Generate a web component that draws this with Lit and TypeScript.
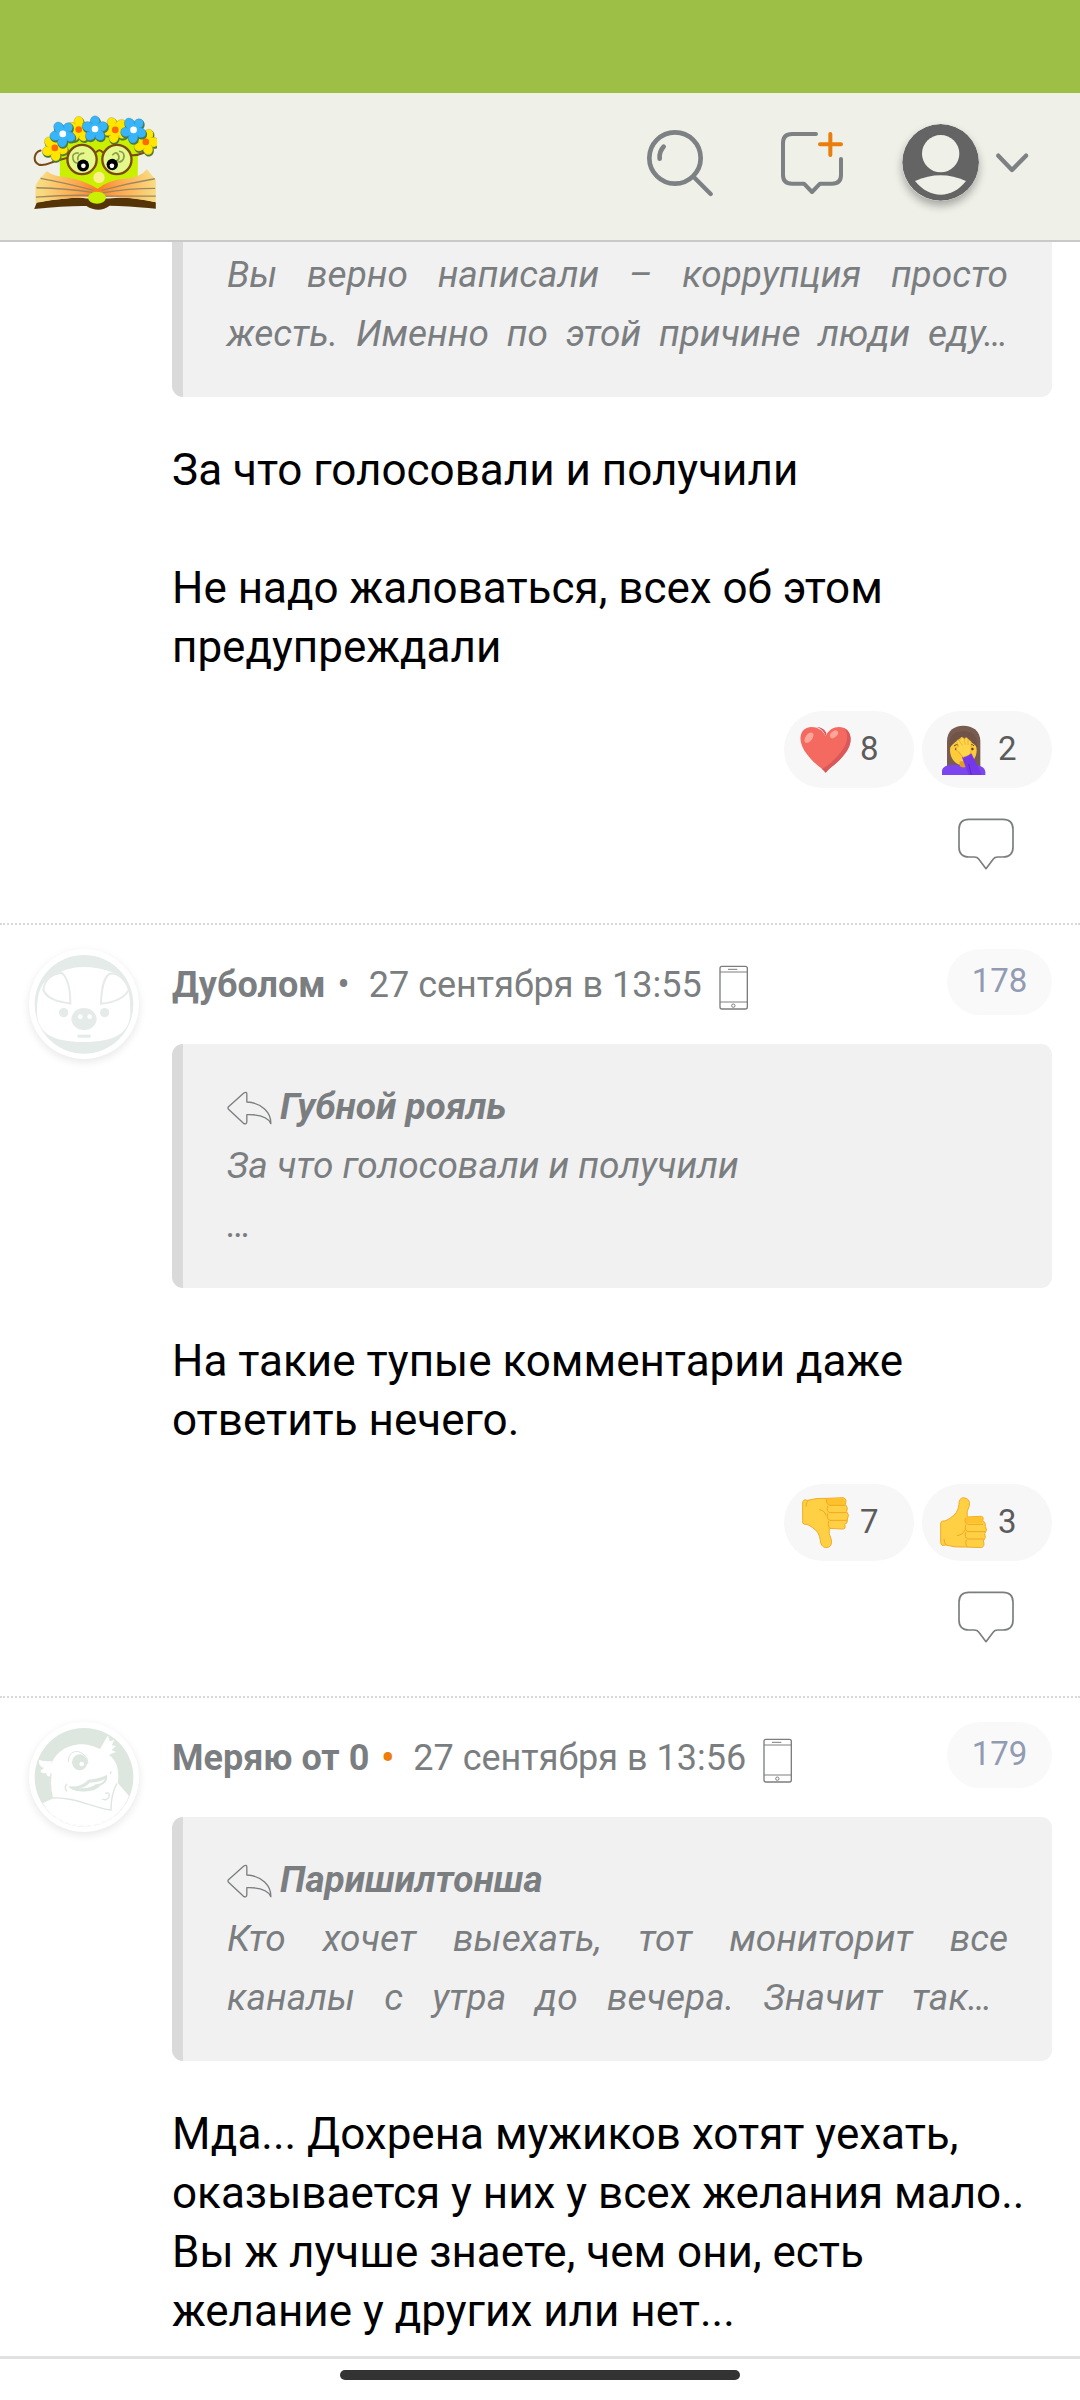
import { LitElement, html, css, svg, nothing } from "lit";
import { customElement, property } from "lit/decorators.js";

type ReactionKind = "heart" | "facepalm" | "down" | "up";
type QuoteLine = { text: string; mode?: "fill" | "clipped" };
type Post = {
  author?: string;
  online?: boolean;
  date?: string;
  number?: string;
  avatar?: "pig" | "dragon";
  quoteAuthor?: string;
  quote: QuoteLine[];
  body: string[];
  reactions: { kind: ReactionKind; label: string; count: number }[];
};

const posts: Post[] = [
  {
    quote: [
      { text: "Вы верно написали – коррупция просто", mode: "fill" },
      { text: "жесть. Именно по этой причине люди еду…", mode: "fill" },
    ],
    body: ["За что голосовали и получили", "", "Не надо жаловаться, всех об этом предупреждали"],
    reactions: [
      { kind: "heart", label: "Сердце", count: 8 },
      { kind: "facepalm", label: "Рукалицо", count: 2 },
    ],
  },
  {
    author: "Дуболом",
    date: "27 сентября в 13:55",
    number: "178",
    avatar: "pig",
    quoteAuthor: "Губной рояль",
    quote: [{ text: "За что голосовали и получили" }, { text: "…" }],
    body: ["На такие тупые комментарии даже ответить нечего."],
    reactions: [
      { kind: "down", label: "Не нравится", count: 7 },
      { kind: "up", label: "Нравится", count: 3 },
    ],
  },
  {
    author: "Меряю от 0",
    online: true,
    date: "27 сентября в 13:56",
    number: "179",
    avatar: "dragon",
    quoteAuthor: "Паришилтонша",
    quote: [
      { text: "Кто хочет выехать, тот мониторит все", mode: "fill" },
      { text: "каналы с утра до вечера. Значит так…", mode: "clipped" },
    ],
    body: [
      "Мда... Дохрена мужиков хотят уехать, оказывается у них у всех желания мало.. Вы ж лучше знаете, чем они, есть желание у других или нет...",
    ],
    reactions: [],
  },
];

const petals = [0, 72, 144, 216, 288];
const flower = (x: number, y: number, turn: number, petal: string, core: string) => svg`
  <g transform="translate(${x} ${y})">
    <g fill="#4f7d3f" transform="translate(2 4) rotate(${turn})">
      ${petals.map((a) => svg`<ellipse cx="0" cy="-23" rx="16" ry="18" transform="rotate(${a})" />`)}
    </g>
    <g fill=${petal} stroke="#00000030" stroke-width="2" transform="rotate(${turn})">
      ${petals.map((a) => svg`<ellipse cx="0" cy="-22" rx="15" ry="18" transform="rotate(${a})" />`)}
    </g>
    <circle r="19" fill=${petal} />
    <circle r="10" fill=${core} />
  </g>`;

const logo = html`<svg class="logo" viewBox="102 98 372 292" aria-hidden="true">
  <defs>
    <radialGradient id="pages" gradientUnits="userSpaceOnUse" cx="296" cy="325" r="170">
      <stop offset="0" stop-color="#ff7a1c" />
      <stop offset="0.35" stop-color="#ffa44a" />
      <stop offset="1" stop-color="#f9da80" />
    </radialGradient>
  </defs>
  <path d="M182 180Q300 150 418 180L416 330H182Z" fill="#c8f000" />
  <path d="M124 208C104 214 100 240 118 250C134 256 150 246 166 241L204 230" fill="none" stroke="#7a4a12" stroke-width="6" stroke-linecap="round" />
  <path d="M398 222C415 224 424 218 436 214" fill="none" stroke="#7a4a12" stroke-width="6" />
  <path d="M105 384L113 364Q230 345 262 352H330Q400 345 471 364V383Q380 374 332 374Q300 398 262 375Q200 374 105 384Z" fill="#553507" />
  <path d="M143 270Q165 286 205 289Q250 295 296 323Q330 297 370 294Q425 290 444 264L471 296V364Q390 346 296 348Q200 348 109 366V315Q112 300 143 270Z" fill="url(#pages)" />
  <path d="M124 292Q200 306 284 328M112 320Q200 322 280 334M110 348Q200 341 280 343M468 293Q390 306 308 328M469 322Q390 322 312 335M471 345H312" fill="none" stroke="#9a8960" stroke-width="4" />
  <ellipse cx="294" cy="350" rx="27" ry="18" fill="#c8f000" />
  <circle cx="300" cy="289" r="17" fill="#fff08c" />
  ${flower(167, 200, 30, "#ffe600", "#ff6a00")}
  ${flower(239, 145, 0, "#ffe600", "#ff6a00")}
  ${flower(191, 158, 40, "#38b4f8", "#ffffff")}
  ${flower(441, 182, 20, "#ffe600", "#ff6a00")}
  ${flower(349, 146, -25, "#ffe600", "#ff6a00")}
  ${flower(404, 146, 40, "#38b4f8", "#ffffff")}
  ${flower(288, 143, 0, "#38b4f8", "#ffffff")}
  <g fill="#e4f88c" stroke="#7a4a12" stroke-width="7">
    <circle cx="249" cy="235" r="44" /><circle cx="354" cy="235" r="44" />
  </g>
  <path d="M291 214Q301 200 312 214" fill="none" stroke="#7a4a12" stroke-width="6" />
  <path d="M239 215Q216 215 222 234Q226 248 242 245M256 216Q234 216 236 238M340 222Q354 206 360 226Q361 238 350 240M360 210Q380 212 374 232Q368 244 358 242" fill="none" stroke="#8c9c48" stroke-width="5" />
  <circle cx="252" cy="253" r="18" /><circle cx="340" cy="250" r="17" />
  <circle cx="253" cy="254" r="7" fill="#fff" /><circle cx="339" cy="254" r="7" fill="#fff" />
</svg>`;

const emojis: Record<ReactionKind, unknown> = {
  heart: html`<svg class="emoji" viewBox="300 100 153 153" aria-hidden="true">
    <path d="M377 246C366 232 344 221 322 192C300 166 296 138 308 121C324 103 360 104 377 136C388 108 424 100 442 119C460 137 452 170 434 190C412 219 390 230 377 246Z" fill="#f46a60" />
    <path d="M430 111C458 122 458 160 434 190C412 219 390 230 377 246C374 242 370 238 366 235C392 221 424 188 436 163C446 138 441 120 430 111Z" fill="#d8585c" />
    <path d="M377 136C372 122 362 113 350 110C362 108 375 117 379 127Z" fill="#d8585c" />
    <ellipse cx="327" cy="141" rx="10" ry="18" transform="rotate(38 327 141)" fill="#ffa59a" />
    <ellipse cx="402" cy="131" rx="9" ry="14" transform="rotate(48 402 131)" fill="#ffa59a" />
  </svg>`,
  facepalm: html`<svg class="emoji" viewBox="714 100 153 153" aria-hidden="true">
    <path d="M741 228V152C741 120 762 105 790 105S841 120 841 152V228Z" fill="#795c50" />
    <ellipse cx="790" cy="179" rx="40" ry="45" fill="#fccb3a" />
    <path d="M748 172C760 158 772 150 784 140C796 150 820 152 832 172C834 132 816 122 790 122S746 132 748 172Z" fill="#70544a" />
    <path d="M779 212H802V232Q790 240 779 232Z" fill="#e59b28" />
    <path d="M726 253V241C728 224 750 221 776 223Q790 238 806 223C840 221 854 228 856 243V253Z" fill="#7c45f0" />
    <path d="M786 200L814 188L842 245L844 253H806Z" fill="#7438e8" />
    <path d="M806 220L814 253" stroke="#5e25cb" stroke-width="3" />
    <path d="M762 166Q770 158 777 164M812 162Q818 160 822 166" fill="none" stroke="#624337" stroke-width="3" />
    <circle cx="769" cy="175" r="4" fill="#513b32" /><circle cx="817" cy="175" r="4" fill="#513b32" />
    <path d="M789 200L769 177Q766 168 776 168L770 152Q772 144 779 150L782 142Q788 137 793 145Q798 136 804 145L810 150Q816 151 813 162V180Q812 190 805 194Z" fill="#ffd54a" stroke="#e9a42c" stroke-width="2" />
    <path d="M778 151L788 165M792 145L796 162M804 147L804 163M789 200L775 181" stroke="#e9a42c" stroke-width="2" fill="none" />
  </svg>`,
  down: html`<svg class="emoji" viewBox="300 110 153 153" aria-hidden="true">
    <path d="M308 128Q309 115 322 120Q350 112 382 114L430 112Q442 116 436 132Q446 142 440 154Q450 164 442 176Q444 190 434 192Q440 208 424 206L388 204Q384 218 394 238Q398 262 376 262Q362 258 361 240Q358 214 338 202Q322 190 314 192Q306 192 308 180Z" fill="#ffd044" stroke="#f0ac28" stroke-width="3" />
    <path d="M382 116L430 114Q438 120 434 134H385Q376 125 382 116Z" fill="#ffc12c" />
    <g fill="none" stroke="#f0a823" stroke-width="3" stroke-linecap="round">
      <path d="M380 117Q377 132 390 135H434M383 138Q378 154 390 157H438M383 160Q378 176 390 180H440M386 183Q382 200 390 204M358 148Q374 150 378 164M324 121Q318 124 318 138" />
    </g>
  </svg>`,
  up: html`<svg class="emoji" viewBox="714 110 153 153" aria-hidden="true">
    <path d="M722 246Q723 259 736 254Q764 262 796 260L844 262Q856 258 850 242Q860 232 854 220Q864 210 856 198Q858 184 848 182Q854 166 838 168L802 170Q798 156 808 136Q812 114 790 112Q776 114 777 132Q774 160 752 172Q736 184 728 182Q720 184 722 194Z" fill="#ffd044" stroke="#f0ac28" stroke-width="3" />
    <path d="M798 170L838 169Q850 170 846 188H798Z" fill="#ffc12c" />
    <g fill="none" stroke="#f0a823" stroke-width="3" stroke-linecap="round">
      <path d="M796 174Q792 188 804 192H848M797 194Q792 210 804 214H854M797 217Q792 232 804 236H850M799 239Q794 254 802 260M772 226Q788 224 796 208M738 253Q732 250 732 236" />
    </g>
  </svg>`,
};

const avatars = {
  pig: html`<svg class="avatar-art" viewBox="86 87 330 330" aria-hidden="true">
    <circle cx="251" cy="253" r="148" fill="#e5ebe9" />
    <path d="M250 141C305 141 340 160 352 162C385 180 390 230 390 275C390 335 350 366 250 366S110 335 110 275C110 230 118 180 165 161C185 156 205 141 250 141Z" fill="#fff" />
    <path d="M185 159C204 176 210 210 210 251C180 246 142 240 129 210C132 180 155 160 185 159Z" fill="#fff" stroke="#e5ebe9" stroke-width="6" />
    <path d="M326 162C306 180 303 215 302 251C335 248 370 240 386 208C376 178 350 154 326 162Z" fill="#fff" stroke="#e5ebe9" stroke-width="6" />
    <g fill="#e5ebe9"><circle cx="190" cy="278" r="14" /><circle cx="313" cy="278" r="14" /><ellipse cx="251" cy="297" rx="38" ry="33" /><rect x="232" y="344" width="39" height="9" /></g>
    <g fill="#fff"><circle cx="240" cy="290" r="7" /><circle cx="268" cy="290" r="7" /></g>
  </svg>`,
  dragon: html`<svg class="avatar-art" viewBox="86 96 330 330" aria-hidden="true">
    <circle cx="251" cy="262" r="148" fill="#dde6df" />
    <path d="M127 340L156 326C146 290 147 262 152 250Q146 242 150 232C160 190 200 163 243 163Q270 163 299 177L323 136L328 154L342 150L334 166L347 168L334 180L347 186L326 194C352 215 356 240 353 280L386 318C364 375 312 410 251 410C198 410 150 382 127 340Z" fill="#fff" />
    <path d="M116 209Q134 216 154 213L152 256Q142 266 137 249Q124 252 120 242L131 234Q114 230 116 209Z" fill="#fff" />
    <path d="M204 216C204 192 218 182 234 185C252 190 264 205 262 222" fill="none" stroke="#dde6df" stroke-width="3" />
    <ellipse cx="238" cy="217" rx="23" ry="24" fill="#dde6df" /><circle cx="244" cy="222" r="7" fill="#fff" />
    <path d="M204 289Q240 294 264 269Q300 266 320 254Q324 278 302 286Q282 308 240 304Q212 302 204 289Z" fill="#dde6df" />
    <path d="M232 294Q252 296 268 278Q298 276 314 266Q310 280 286 283Q268 298 232 294Z" fill="#fff" />
    <path d="M200 281Q190 290 199 304M304 327Q320 334 326 320Q330 304 314 310M330 252L332 244M156 324C220 320 270 350 332 360Q332 310 350 280M152 250Q147 290 156 324" fill="none" stroke="#dde6df" stroke-width="4" />
    <path d="M130 342C160 400 240 420 300 400C350 384 372 350 385 320" fill="none" stroke="#dde6df" stroke-width="1" stroke-dasharray="12 10" />
  </svg>`,
};

@customElement("forum-header")
class ForumHeader extends LitElement {
  static styles = css`
    :host { display: block; }
    .bar {
      display: flex; align-items: center; box-sizing: border-box;
      padding: 21px 51px 29px 33px;
      background: #eff0e8; border-bottom: 2px solid #c9cac7;
    }
    .home { display: block; margin-right: auto; }
    .logo { display: block; width: 124px; height: 97px; }
    .actions { display: flex; align-items: center; }
    button { display: flex; align-items: center; margin: 0; padding: 0; border: 0; background: none; cursor: pointer; }
    .search svg { width: 68px; height: 68px; }
    .compose { margin: 0 58px 0 66px; }
    .compose svg { width: 64px; height: 64px; }
    .account { gap: 16px; }
    .user { width: 77px; height: 77px; border-radius: 50%; box-shadow: 0 5px 9px #0000004d; }
    .chevron { width: 34px; height: 22px; }
  `;
  render() {
    return html`<header class="bar">
      <a class="home" href="#" aria-label="Главная">${logo}</a>
      <nav class="actions">
        <button class="search" aria-label="Поиск">
          <svg viewBox="78 90 204 204" fill="none" stroke="#7d8184" stroke-linecap="round" aria-hidden="true">
            <circle cx="165" cy="177" r="77" stroke-width="14" />
            <path d="M222 235L272 285" stroke-width="13" />
            <path d="M131 143Q117 158 119 179" stroke-width="14" />
          </svg>
        </button>
        <button class="compose" aria-label="Новая запись">
          <svg viewBox="480 96 192 192" fill="none" stroke-linecap="round" stroke-linejoin="round" aria-hidden="true">
            <path d="M588 105H516Q489 105 489 132V228Q489 254 516 254H552L576 279L600 254H636Q663 254 663 228V180" stroke="#7d8184" stroke-width="12" />
            <path d="M631 105V168M600 136H663" stroke="#ea7d0c" stroke-width="12" />
          </svg>
        </button>
        <button class="account" aria-label="Профиль">
          <svg class="user" viewBox="846 72 231 231" aria-hidden="true">
            <circle cx="962" cy="187" r="115" fill="#646464" />
            <circle cx="962" cy="161" r="56" fill="#eff0e8" />
            <path d="M885 243Q962 208 1038 243C1016 271 990 284 962 284S908 271 885 243Z" fill="#eff0e8" />
          </svg>
          <svg class="chevron" viewBox="1126 154 102 66" fill="none" stroke="#7d8184" stroke-width="13" stroke-linecap="round" stroke-linejoin="round" aria-hidden="true">
            <path d="M1136 165L1177 208L1219 165" />
          </svg>
        </button>
      </nav>
    </header>`;
  }
}

@customElement("forum-post")
class ForumPost extends LitElement {
  @property({ attribute: false }) post!: Post;

  static styles = css`
    :host { display: block; }
    a { color: inherit; text-decoration: none; }
    button { margin: 0; border: 0; font: inherit; cursor: pointer; }
    .post { display: flex; gap: 33px; padding: 24px 28px 0 29px; border-top: 2px dotted #d9d9d9; }
    .partial { padding-top: 0; border-top: 0; }
    .aside { flex: none; width: 110px; }
    .avatar { display: block; height: 110px; border-radius: 50%; background: #fff; box-shadow: 0 3px 9px #00000018; }
    .avatar-art { display: block; width: 110px; height: 110px; }
    .main { flex: 1; min-width: 0; }
    .head { display: flex; align-items: center; justify-content: space-between; height: 66px; margin-bottom: 29px; }
    .meta { display: flex; align-items: center; padding-top: 5px; color: #7b7e80; font-size: 36px; line-height: 42px; white-space: nowrap; }
    .author { font-weight: 700; }
    .dot { margin: 0 19px 0 12px; }
    .dot.online { color: #ee7d0b; font-weight: 700; }
    .phone { width: 30px; height: 46px; margin: 6px 0 0 17px; }
    .number {
      display: flex; align-items: center; justify-content: center; box-sizing: border-box;
      width: 105px; height: 66px; padding-bottom: 3px; border-radius: 33px;
      background: #f9f9f9; color: #929bb2; font-size: 33px; line-height: 39px;
    }
    .quote {
      margin: 0; padding: 33px 44px 34px; border-left: 11px solid #dadada; border-radius: 11px;
      background: #f1f1f1; color: #7b7e80; font-size: 37px; font-style: italic; line-height: 59px;
    }
    .partial .quote { padding-top: 3px; border-top-left-radius: 0; border-top-right-radius: 0; }
    .quote-author { display: flex; align-items: center; gap: 8px; font-weight: 700; }
    .arrow { width: 45px; height: 34px; margin-top: 3px; }
    .fill, .clipped { text-align: justify; text-align-last: justify; }
    .clipped { padding-right: 16px; }
    .text { margin: 44px 0 0; color: #000; font-size: 44px; line-height: 59px; }
    .text p { margin: 0; min-height: 59px; }
    .reactions { display: flex; justify-content: flex-end; gap: 8px; margin-top: 34px; }
    .reaction {
      display: flex; align-items: center; gap: 9px; box-sizing: border-box; width: 130px; height: 77px;
      padding: 0 0 0 16px; border-radius: 39px; background: #f7f7f7; color: #5c5c5c; font-size: 33px; line-height: 39px;
    }
    .emoji { width: 51px; height: 51px; }
    .count { padding-bottom: 3px; }
    .reply { display: block; margin: 30px 37px 53px auto; padding: 0; background: none; }
    .reply svg { display: block; width: 58px; height: 52px; }
  `;

  render() {
    const p = this.post;
    return html`<article class="post ${p.author ? "" : "partial"}">
      <div class="aside">
        ${p.avatar ? html`<a class="avatar" href="#" aria-label=${p.author}>${avatars[p.avatar]}</a>` : nothing}
      </div>
      <div class="main">
        ${p.author
          ? html`<header class="head">
              <div class="meta">
                <a class="author" href="#">${p.author}</a>
                <span class="dot ${p.online ? "online" : ""}">•</span>
                <time>${p.date}</time>
                <svg class="phone" viewBox="233 136 90 138" fill="none" stroke="#7b7e80" stroke-width="3" aria-hidden="true">
                  <rect x="236" y="140" width="82" height="128" rx="6" stroke-width="4" />
                  <path d="M236 157H318M236 247H318M260 149H288" />
                  <circle cx="276" cy="258" r="5" />
                </svg>
              </div>
              <a class="number" href="#">${p.number}</a>
            </header>`
          : nothing}
        <blockquote class="quote">
          ${p.quoteAuthor
            ? html`<a class="quote-author" href="#">
                <svg class="arrow" viewBox="680 512 134 102" fill="none" stroke="#7b7e80" stroke-width="4" stroke-linejoin="round" aria-hidden="true">
                  <path d="M684 559L730 518Q739 513 739 521V545C784 547 812 578 811 610C802 588 774 582 739 583V604Q738 614 729 609L684 567Q681 563 684 559Z" />
                </svg>
                <span>${p.quoteAuthor}</span>
              </a>`
            : nothing}
          ${p.quote.map((l) => html`<div class=${l.mode ?? "plain"}>${l.text}</div>`)}
        </blockquote>
        <div class="text">${p.body.map((t) => html`<p>${t}</p>`)}</div>
        ${p.reactions.length
          ? html`<div class="reactions">
                ${p.reactions.map(
                  (r) => html`<button class="reaction" aria-label="${r.label}: ${r.count}">
                    ${emojis[r.kind]}<span class="count">${r.count}</span>
                  </button>`
                )}
              </div>
              <button class="reply" aria-label="Ответить">
                <svg viewBox="771 380 174 156" fill="none" stroke="#7b7e80" stroke-width="5" stroke-linejoin="round" aria-hidden="true">
                  <path d="M807 384H909Q939 384 939 414V467Q939 497 909 497H893Q884 497 880 503L858 532L836 503Q832 497 823 497H807Q777 497 777 467V414Q777 384 807 384Z" />
                </svg>
              </button>`
          : nothing}
      </div>
    </article>`;
  }
}

@customElement("app-root")
class AppRoot extends LitElement {
  static styles = css`
    :host {
      display: flex; flex-direction: column; min-height: 100vh; background: #fff;
      font-family: Roboto, "Noto Sans", sans-serif;
    }
    .status { height: 93px; background: #9ebf45; }
    .system { display: flex; justify-content: center; margin-top: auto; padding: 11px 0 20px; border-top: 3px solid #e0e1e0; }
    .handle { width: 37%; height: 10px; border-radius: 5px; background: #333; }
    .feed { padding-bottom: 15px; }
  `;
  render() {
    return html`
      <div class="status"></div>
      <forum-header></forum-header>
      <main class="feed">${posts.map((p) => html`<forum-post .post=${p}></forum-post>`)}</main>
      <footer class="system"><div class="handle"></div></footer>
    `;
  }
}
